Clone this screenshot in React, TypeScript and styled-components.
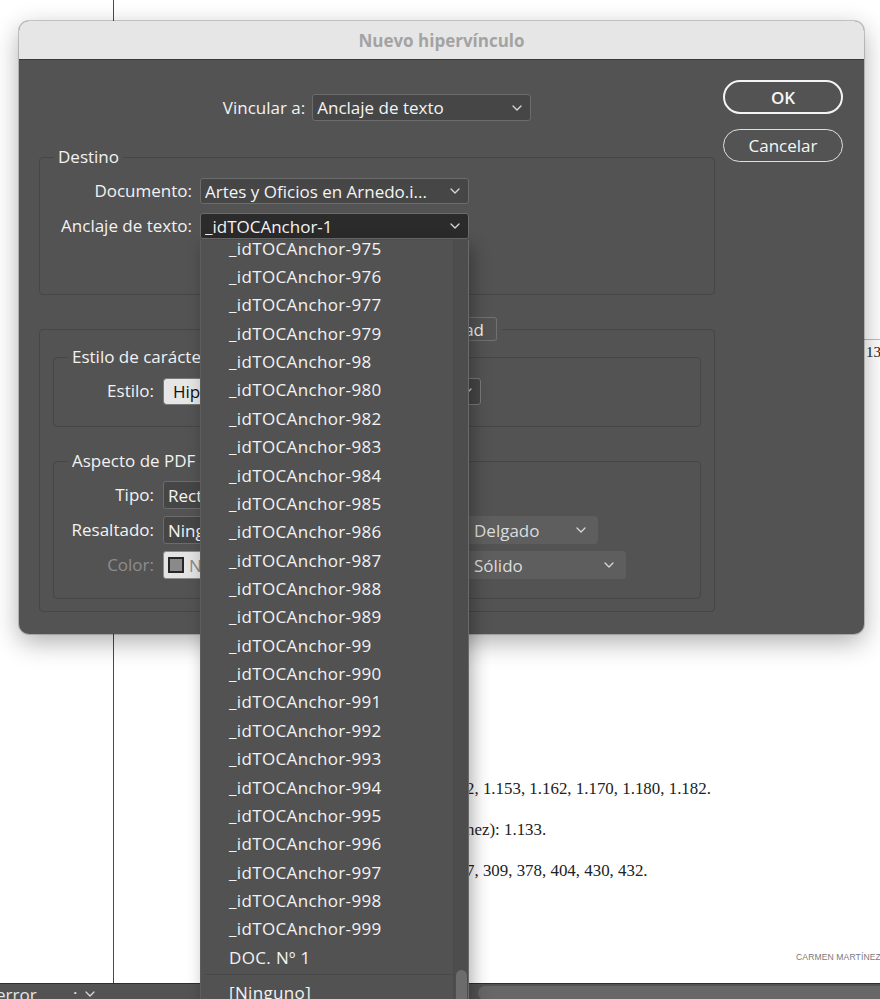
import React from "react";
import styled, { createGlobalStyle } from "styled-components";

const GlobalStyle = createGlobalStyle`
  html, body { margin: 0; padding: 0; background: #fff; }
  body { font-family: "Open Sans", "Noto Sans", sans-serif; overflow: hidden; }
  * { box-sizing: border-box; }
`;

const Screen = styled.div`
  position: relative;
  width: 880px;
  height: 999px;
  overflow: hidden;
  display: grid;
  grid-template-rows: 983px 16px;
  background: #fff;
`;

const Canvas = styled.div`
  display: flex;
  background: #fff;
  overflow: hidden;
`;

const Pasteboard = styled.div`
  width: 113px;
  flex: none;
`;

const Page = styled.div`
  flex: 1;
  min-width: 0;
  border-left: 1px solid #4a4a4a;
  display: flex;
  flex-direction: column;
  font-family: "Liberation Serif", serif;
  color: #222;
`;

const RightMark = styled.div`
  margin: 339px 0 0 750px;
  width: 40px;
  flex: none;
  border-top: 1px solid #bdbdbd;
  padding-left: 2px;
  font-size: 15px;
  line-height: 24px;
  white-space: nowrap;
`;

const PageLine = styled.div<{ $mt: number }>`
  margin: ${(p) => p.$mt}px 0 0 352px;
  font-size: 16.9px;
  line-height: 20px;
  white-space: nowrap;
  flex: none;
`;

const Footer = styled.div`
  margin: 70px 0 0 682px;
  font-family: "Liberation Sans", sans-serif;
  font-size: 8.6px;
  line-height: 12px;
  letter-spacing: 0.1px;
  color: #7a7a7a;
  white-space: nowrap;
  flex: none;
`;

const StatusBar = styled.div`
  display: flex;
  background: #535353;
  border-top: 1px solid #2e2e2e;
  overflow: hidden;
  color: #e6e6e6;
`;

const StatusLeft = styled.div`
  width: 200px;
  flex: none;
  display: flex;
  align-items: flex-start;
  gap: 8px;
  font-size: 17px;
  line-height: 20px;
  padding-top: 1px;
  margin-left: -4px;
  white-space: nowrap;
  svg {
    margin-top: 6px;
  }
`;

const StatusWord = styled.span`
  width: 69px;
`;

const HScroll = styled.div`
  margin: 2px 0 0 282px;
  flex: 1;
  height: 14px;
  background: #676767;
  border-radius: 7px 0 0 7px;
`;

const Dialog = styled.div`
  position: absolute;
  left: 19px;
  top: 21px;
  width: 845px;
  height: 613px;
  border-radius: 10px;
  overflow: hidden;
  background: #535353;
  box-shadow: 0 8px 26px rgba(0, 0, 0, 0.32), 0 0 0 1px rgba(0, 0, 0, 0.18);
  display: flex;
  flex-direction: column;
`;

const TitleBar = styled.div`
  height: 39px;
  flex: none;
  background: #e6e6e6;
  border-bottom: 1px solid #3a3a3a;
  display: flex;
  align-items: center;
  justify-content: center;
  font-weight: 700;
  font-size: 17px;
  color: #a3a3a3;
`;

const Body = styled.div`
  flex: 1;
  display: flex;
  padding: 20px 21px 20px 20px;
  color: #f2f2f2;
  font-size: 17px;
`;

const LeftCol = styled.div`
  width: 676px;
  flex: none;
  padding-top: 14px;
  display: flex;
  flex-direction: column;
`;

const RightCol = styled.div`
  margin-left: 8px;
  width: 120px;
  display: flex;
  flex-direction: column;
  gap: 15px;
`;

const Button = styled.div<{ $primary?: boolean }>`
  height: ${(p) => (p.$primary ? 34 : 33)}px;
  border-radius: 17px;
  border: ${(p) => (p.$primary ? "2px solid #f4f4f4" : "1px solid #e0e0e0")};
  display: flex;
  align-items: center;
  justify-content: center;
  color: #f6f6f6;
  font-size: 17px;
  font-weight: ${(p) => (p.$primary ? 600 : 400)};
`;

const VincRow = styled.div`
  display: flex;
  align-items: center;
  justify-content: center;
  gap: 7px;
`;

const Label = styled.span<{ $muted?: boolean }>`
  line-height: 20px;
  text-align: right;
  white-space: nowrap;
  color: ${(p) => (p.$muted ? "#8d8d8d" : "#f2f2f2")};
`;

const Group = styled.fieldset<{ $mt: number; $pad: string }>`
  margin: ${(p) => p.$mt}px 0 0 0;
  padding: ${(p) => p.$pad};
  border: 1px solid #464646;
  border-radius: 4px;
  min-width: 0;
`;

const Legend = styled.legend`
  margin-left: 14px;
  padding: 0 4px;
  font-size: 17px;
  line-height: 20px;
  color: #f2f2f2;
`;

const TabLegend = styled.legend`
  margin-left: 192px;
  padding: 0 5px;
  display: flex;
`;

const Tab = styled.div<{ $w: number; $first?: boolean }>`
  width: ${(p) => p.$w}px;
  height: 24px;
  border: 1px solid #707070;
  border-left-width: ${(p) => (p.$first ? 1 : 0)}px;
  border-radius: ${(p) => (p.$first ? "3px 0 0 3px" : "0 3px 3px 0")};
  background: ${(p) => (p.$first ? "#6a6a6a" : "transparent")};
  display: flex;
  align-items: center;
  justify-content: flex-end;
  padding-right: 12px;
  font-size: 17px;
  color: #f2f2f2;
`;

const FormGrid = styled.div<{ $cols: string; $gap: number }>`
  display: grid;
  grid-template-columns: ${(p) => p.$cols};
  column-gap: ${(p) => p.$gap}px;
  row-gap: 9px;
  align-items: center;
`;

const FormRow = styled.div<{ $mt?: number }>`
  display: flex;
  align-items: center;
  gap: 9px;
  height: 28px;
  margin-top: ${(p) => p.$mt ?? 0}px;
`;

const RowLabel = styled(Label)<{ $w: number }>`
  width: ${(p) => p.$w}px;
  flex: none;
`;

type Variant = "normal" | "open" | "field" | "light" | "muted";

const bgFor: Record<Variant, string> = {
  normal: "#464646",
  open: "#2b2b2b",
  field: "#464646",
  light: "#e4e4e4",
  muted: "#5e5e5e",
};
const borderFor: Record<Variant, string> = {
  normal: "#6c6c6c",
  open: "#6c6c6c",
  field: "#7a7a7a",
  light: "#8c8c8c",
  muted: "#5e5e5e",
};

const SelectBox = styled.div<{ $w: number; $h: number; $v: Variant }>`
  width: ${(p) => p.$w}px;
  height: ${(p) => p.$h}px;
  flex: none;
  display: flex;
  align-items: center;
  padding: 0 ${(p) => (p.$v === "muted" ? 11 : 8)}px 0 ${(p) => (p.$v === "field" ? 0 : p.$v === "muted" ? 7 : 4)}px;
  border: 1px solid ${(p) => borderFor[p.$v]};
  border-radius: 3px;
  background: ${(p) => bgFor[p.$v]};
  color: ${(p) => (p.$v === "light" ? "#8a8a8a" : p.$v === "muted" ? "#dcdcdc" : "#f4f4f4")};
  font-size: 17px;
  white-space: nowrap;
  overflow: hidden;
`;

const SelectText = styled.span<{ $field?: boolean }>`
  flex: 1;
  min-width: 0;
  overflow: hidden;
  align-self: stretch;
  display: flex;
  align-items: center;
  gap: 5px;
  margin-right: 6px;
  ${(p) =>
    p.$field
      ? `background: #e6e6e6; color: #111; padding-left: 9px; margin-right: 14px; border-radius: 2px 0 0 2px;`
      : ""}
`;

const Swatch = styled.span`
  width: 16px;
  height: 16px;
  flex: none;
  border: 2px solid #262626;
  background: #8a8a8a;
`;

const ChevronSvg = styled.svg`
  flex: none;
`;

const Chevron = ({ color = "#d8d8d8" }: { color?: string }) => (
  <ChevronSvg width="10" height="6" viewBox="0 0 10 6">
    <path d="M1 1 L5 5 L9 1" fill="none" stroke={color} strokeWidth="1.3" strokeLinecap="round" strokeLinejoin="round" />
  </ChevronSvg>
);

const Select = ({
  w,
  h = 27,
  v = "normal",
  children,
  swatch,
}: {
  w: number;
  h?: number;
  v?: Variant;
  children?: React.ReactNode;
  swatch?: boolean;
}) => (
  <SelectBox $w={w} $h={h} $v={v}>
    <SelectText $field={v === "field"}>
      {swatch && <Swatch />}
      {children}
    </SelectText>
    <Chevron color={v === "light" ? "#555" : "#d8d8d8"} />
  </SelectBox>
);

const Dropdown = styled.div`
  position: absolute;
  left: 200px;
  top: 240px;
  width: 269px;
  height: 770px;
  display: flex;
  background: #525252;
  border-left: 1px solid #5d5d5d;
  border-right: 1px solid #6a6a6a;
  box-shadow: 4px 6px 16px rgba(0, 0, 0, 0.3);
  overflow: hidden;
`;

const ItemsCol = styled.div`
  flex: 1;
  display: flex;
  flex-direction: column;
  margin-top: -6px;
`;

const Item = styled.div`
  height: 28.36px;
  flex: none;
  display: flex;
  align-items: center;
  padding-left: 28px;
  font-size: 17px;
  letter-spacing: 0.35px;
  color: #f3f3f3;
  white-space: nowrap;
`;

const Separator = styled.div`
  height: 7px;
  flex: none;
  margin-left: 4px;
  display: flex;
  align-items: center;
  &::after {
    content: "";
    flex: 1;
    height: 1px;
    background: #484848;
  }
`;

const Track = styled.div`
  width: 15px;
  flex: none;
  background: #4d4d4d;
  border-left: 1px solid #4a4a4a;
  display: flex;
  flex-direction: column;
  align-items: center;
`;

const Thumb = styled.div`
  margin-top: 730px;
  width: 11px;
  height: 60px;
  border-radius: 6px;
  background: #6c6c6c;
`;

const anchors = [
  "975", "976", "977", "979", "98", "980", "982", "983", "984", "985", "986", "987", "988",
  "989", "99", "990", "991", "992", "993", "994", "995", "996", "997", "998", "999",
];

export default function App() {
  return (
    <>
      <GlobalStyle />
      <Screen>
        <Canvas>
          <Pasteboard />
          <Page>
            <RightMark>13</RightMark>
            <PageLine $mt={415}>2, 1.153, 1.162, 1.170, 1.180, 1.182.</PageLine>
            <PageLine $mt={21}>nez): 1.133.</PageLine>
            <PageLine $mt={21}>7, 309, 378, 404, 430, 432.</PageLine>
            <Footer>CARMEN MARTÍNEZ</Footer>
          </Page>
        </Canvas>
        <StatusBar>
          <StatusLeft>
            <StatusWord>error</StatusWord>
            <span>:</span>
            <Chevron />
          </StatusLeft>
          <HScroll />
        </StatusBar>

        <Dialog>
          <TitleBar>Nuevo hipervínculo</TitleBar>
          <Body>
            <LeftCol>
              <VincRow>
                <Label>Vincular a:</Label>
                <Select w={219}>Anclaje de texto</Select>
              </VincRow>

              <Group $mt={26} $pad="11px 0 55px 0">
                <Legend>Destino</Legend>
                <FormGrid $cols="152px 269px" $gap={8}>
                  <Label>Documento:</Label>
                  <Select w={269} h={26}>Artes y Oficios en Arnedo.i...</Select>
                  <Label>Anclaje de texto:</Label>
                  <Select w={269} h={26} v="open">_idTOCAnchor-1</Select>
                </FormGrid>
              </Group>

              <Group $mt={22} $pad="6px 13px 12px 13px">
                <TabLegend>
                  <Tab $w={117} $first>Apariencia</Tab>
                  <Tab $w={130}>Accesibilidad</Tab>
                </TabLegend>

                <Group $mt={0} $pad="10px 0 21px 0">
                  <Legend>Estilo de carácter</Legend>
                  <FormRow>
                    <RowLabel $w={100}>Estilo:</RowLabel>
                    <Select w={318} v="field">Hipervínculo</Select>
                  </FormRow>
                </Group>

                <Group $mt={24} $pad="10px 0 19px 0">
                  <Legend>Aspecto de PDF</Legend>
                  <FormRow>
                    <RowLabel $w={100}>Tipo:</RowLabel>
                    <Select w={260} h={28}>Rectángulo invisible</Select>
                  </FormRow>
                  <FormRow $mt={7}>
                    <RowLabel $w={100}>Resaltado:</RowLabel>
                    <Select w={200} h={28}>Ninguno</Select>
                    <RowLabel $w={85}>Grosor:</RowLabel>
                    <Select w={132} h={28} v="muted">Delgado</Select>
                  </FormRow>
                  <FormRow $mt={7}>
                    <RowLabel $w={100} $muted>Color:</RowLabel>
                    <Select w={200} h={28} v="light" swatch>Negro</Select>
                    <RowLabel $w={85} $muted>Estilo:</RowLabel>
                    <Select w={160} h={28} v="muted">Sólido</Select>
                  </FormRow>
                </Group>
              </Group>
            </LeftCol>

            <RightCol>
              <Button $primary>OK</Button>
              <Button>Cancelar</Button>
            </RightCol>
          </Body>
        </Dialog>

        <Dropdown>
          <ItemsCol>
            {anchors.map((a) => (
              <Item key={a}>_idTOCAnchor-{a}</Item>
            ))}
            <Item>DOC. Nº 1</Item>
            <Separator />
            <Item>[Ninguno]</Item>
          </ItemsCol>
          <Track>
            <Thumb />
          </Track>
        </Dropdown>
      </Screen>
    </>
  );
}
